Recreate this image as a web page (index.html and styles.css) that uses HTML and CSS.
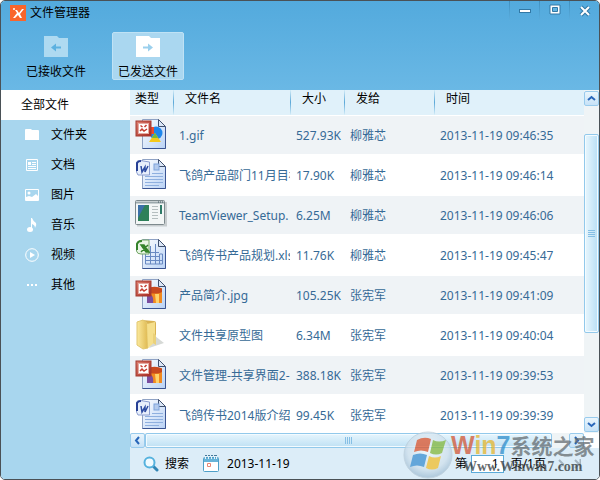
FILE: index.html
```html
<!DOCTYPE html>
<html lang="zh-CN">
<head>
  <meta charset="UTF-8" />
  <meta name="viewport" content="width=device-width, initial-scale=1.0" />
  <title>文件管理器</title>
  <link rel="stylesheet" href="styles.css">
</head>
<body>
  <svg width="0" height="0" class="defs" aria-hidden="true">
    <defs>
      <linearGradient id="pageFill" x1="0" y1="0" x2="1" y2="1">
        <stop offset="0" stop-color="#fdfeff" />
        <stop offset="1" stop-color="#b9d2f5" />
      </linearGradient>
      <linearGradient id="redFill" x1="0" y1="0" x2="1" y2="1">
        <stop offset="0" stop-color="#dd8070" />
        <stop offset="1" stop-color="#a82820" />
      </linearGradient>
      <linearGradient id="gold" x1="0" y1="0" x2="1" y2="0">
        <stop offset="0" stop-color="#fbe99d" />
        <stop offset="1" stop-color="#dfb950" />
      </linearGradient>
      <radialGradient id="orb" cx="0.5" cy="0.4" r="0.6">
        <stop offset="0" stop-color="#f4f9fc" />
        <stop offset="0.7" stop-color="#cfe0ec" />
        <stop offset="1" stop-color="#9dbbd2" />
      </radialGradient>
      <symbol id="page" viewBox="0 0 32 32">
        <path d="M7.500 1.500h16l7 7v22h-23z" fill="url(#pageFill)" stroke="#8fa2c4" />
        <path d="M30.500 9v21.500h-23" fill="none" stroke="#3a5492" />
        <path d="M23.500 1.500v7h7z" fill="#dce7f7" stroke="#40506f" />
      </symbol>
      <symbol id="badge" viewBox="0 0 32 32">
        <rect x="1" y="3" width="15" height="15" fill="url(#redFill)" stroke="#a33a31" />
        <rect x="3.500" y="5.500" width="10" height="10" fill="#fff" stroke="#e4aaa2" />
        <path d="M5.500 7.500l2 1.500M11.500 7l-2 2M5 13l2-2 2 2 3-2" fill="none" stroke="#c43d30" stroke-width="1.500" />
      </symbol>
      <symbol id="i-gif" viewBox="0 0 32 32">
        <use href="#page" />
        <circle cx="21" cy="15" r="6.500" fill="#1d86ed" />
        <rect x="14" y="9" width="5" height="7" fill="#ef4a2d" />
        <path d="M20 15l6 9H14z" fill="#f5c819" />
        <path d="M20 15l3 5-6 0z" fill="#76b83a" />
        <use href="#badge" />
      </symbol>
      <symbol id="i-jpg" viewBox="0 0 32 32">
        <use href="#page" />
        <rect x="12" y="10" width="15" height="15" fill="#f28a20" />
        <path d="M12 11c3-3 12-3 15 0v3c-4 2-10 2-15 0z" fill="#c8491f" />
        <path d="M12 18c4-4 7 1 6 7h-6z" fill="#7b4d9f" />
        <path d="M20 16h4v9h-3z" fill="#ffd26a" />
        <use href="#badge" />
      </symbol>
      <symbol id="i-doc" viewBox="0 0 32 32">
        <use href="#page" />
        <rect x="19" y="6" width="5" height="6" fill="#b4cbed" stroke="#7fa4dc" />
        <path d="M17 15.500h11M10 18.500h18M10 21.500h18M10 24.500h18M10 27.500h14" stroke="#8fb0df" />
        <path d="M1.500 5q0-3 4-2.500l9 1.500v13H3l-1.500-3z" fill="#e8effb" stroke="#8b9dce" />
        <path d="M2 13V5q1-2 4-2" fill="none" stroke="#274095" stroke-width="2" />
        <path d="M6 8l1 6 3-5v5l3-6" fill="none" stroke="#2e4ca2" stroke-width="1.500" />
      </symbol>
      <symbol id="i-xls" viewBox="0 0 32 32">
        <use href="#page" />
        <path d="M10 14.500h14M10 18.500h14M10 22.500h18M10.500 14v12h17V16h-3v10M15.500 8v18M20.500 6v20" fill="none" stroke="#6889c2" />
        <path d="M1.500 6q1-4 6-4h6.500v14H6q-4 0-4.500-3z" fill="#e9f5e5" stroke="#72a565" />
        <path d="M2 12V6q1-3 5-3" fill="none" stroke="#35832b" stroke-width="2" />
        <path d="M6 7h3l5 7h-3zM13 7L6 14" fill="#35832b" stroke="#35832b" stroke-width="1.500" />
      </symbol>
      <symbol id="i-exe" viewBox="0 0 32 32">
        <path d="M2 27.500h29V4" fill="none" stroke="#c8cdcf" stroke-width="2" />
        <rect x="0.500" y="2.500" width="29" height="24" rx="1" fill="#f3f6f6" stroke="#7e8a8e" />
        <path d="M1 4.500h28" stroke="#9ba8ac" stroke-width="2" />
        <path d="M23 4h1M25 4h1M27 4h1" stroke="#43565f" />
        <rect x="3" y="7" width="11" height="16" fill="#2e8059" />
        <path d="M3 7h7L3 20z" fill="#3b70a8" />
        <path d="M17 8.500h6M17 11.500h6M17 14.500h6M17 17.500h6M17 20.500h6" stroke="#b5bebf" />
        <path d="M26 7v9" stroke="#2f7b68" stroke-width="2" />
      </symbol>
      <symbol id="i-dir" viewBox="0 0 32 32">
        <path d="M20 18l9 7-15 5z" fill="#d6d9d6" />
        <path d="M7 2l12 1q2 0 2 2v19L8 29z" fill="#d8b354" />
        <path d="M2 4l6-2 4 3 1 25-5 1-6-4z" fill="url(#gold)" stroke="#e2c76f" />
        <path d="M12 6l8-2v20l-7 6z" fill="#f5df8c" />
        <path d="M18 15l3 2v10l-3-2z" fill="#ead17a" />
      </symbol>
    </defs>
  </svg>

  <div class="window">
    <header class="top">
      <div class="titlebar">
        <svg class="logo" width="16" height="16" viewBox="0 0 16 16" aria-hidden="true">
          <rect width="16" height="16" fill="#f9652c" />
          <path d="M5 5l2 0 2 3 3-4h2l-4 5 2 4h-2l-2-3-3 3H3l4-5z" fill="#fff" />
          <circle cx="4" cy="4" r="1" fill="#fff" />
        </svg>
        <h1>文件管理器</h1>
        <div class="controls">
          <button type="button" aria-label="最小化">
            <svg width="14" height="14" viewBox="0 0 14 14"><rect x="1.500" y="5.500" width="11" height="3" fill="#fff" stroke="#3278a5" /></svg>
          </button>
          <button type="button" aria-label="最大化">
            <svg width="14" height="14" viewBox="0 0 14 14"><path d="M2 1h10v9H2z" fill="#fff" stroke="#3278a5" /><path d="M4.500 3.500h5v4h-5z" fill="#62b4e1" stroke="#3278a5" /></svg>
          </button>
          <button type="button" aria-label="关闭">
            <svg width="14" height="14" viewBox="0 0 14 14"><path d="M3 3l8 8M11 3l-8 8" stroke="#3278a5" stroke-width="4" /><path d="M3 3l8 8M11 3l-8 8" stroke="#fff" stroke-width="2" /></svg>
          </button>
        </div>
      </div>
      <nav class="tabs">
        <button type="button" class="tab">
          <svg width="24" height="21" viewBox="0 0 24 21"><path d="M0 0h13l2 2h9v19H0z" fill="#aedaf1" /><path d="M7 11.500l5-4v3h5v2h-5v3z" fill="#5cb1e0" /></svg>
          已接收文件
        </button>
        <button type="button" class="tab active">
          <svg width="24" height="21" viewBox="0 0 24 21"><path d="M0 0h13l2 2h9v19H0z" fill="#fff" /><path d="M17 11.500l-5-4v3H7v2h5v3z" fill="#9bd0ed" /></svg>
          已发送文件
        </button>
      </nav>
    </header>

    <div class="content">
      <nav class="sidebar">
        <a href="#" class="all">全部文件</a>
        <a href="#">
          <svg width="14" height="14" viewBox="0 0 14 14"><path d="M0 2q0-1 1-1h5l1 1h6q1 0 1 1v9H0z" fill="#fff" /></svg>
          文件夹
        </a>
        <a href="#">
          <svg width="14" height="14" viewBox="0 0 14 14"><path d="M1.500 1.500h11v11h-11zM7 4.500h4M7 6.500h4M3 8.500h8M3 10.500h8" fill="none" stroke="#fff" /><path d="M3 4h3v3H3z" fill="#fff" /></svg>
          文档
        </a>
        <a href="#">
          <svg width="14" height="14" viewBox="0 0 14 14"><path d="M0.500 1.500h13v11H0.500z" fill="none" stroke="#fff" /><circle cx="4" cy="5" r="1.500" fill="#fff" /><path d="M1 9l3-1 3 1 4-3 2 2v5H1z" fill="#fff" /></svg>
          图片
        </a>
        <a href="#">
          <svg width="14" height="14" viewBox="0 0 14 14"><ellipse cx="5" cy="11.500" rx="3" ry="2.500" fill="#fff" /><path d="M6 0h1q1 3 4 5 1 2-1 5 0-3-3-4v6H6z" fill="#fff" /></svg>
          音乐
        </a>
        <a href="#">
          <svg width="14" height="14" viewBox="0 0 14 14"><circle cx="7" cy="7" r="6.300" fill="none" stroke="#fff" /><path d="M5 4l5 3-5 3z" fill="#fff" /></svg>
          视频
        </a>
        <a href="#">
          <svg width="14" height="14" viewBox="0 0 14 14"><path d="M2 6h2v2H2zM6 6h2v2H6zM10 6h2v2h-2z" fill="#fff" /></svg>
          其他
        </a>
      </nav>

      <main class="main">
        <div class="list">
          <table>
            <colgroup>
              <col class="c-type"><col class="c-name"><col class="c-size"><col class="c-to"><col>
            </colgroup>
            <thead>
              <tr><th>类型</th><th>文件名</th><th>大小</th><th>发给</th><th>时间</th></tr>
            </thead>
            <tbody>
              <tr><td><svg width="32" height="32"><use href="#i-gif" /></svg></td><td>1.gif</td><td>527.93K</td><td>柳雅芯</td><td>2013-11-19 09:46:35</td></tr>
              <tr><td><svg width="32" height="32"><use href="#i-doc" /></svg></td><td>飞鸽产品部门11月目标</td><td>17.90K</td><td>柳雅芯</td><td>2013-11-19 09:46:14</td></tr>
              <tr><td><svg width="32" height="32"><use href="#i-exe" /></svg></td><td>TeamViewer_Setup.</td><td>6.25M</td><td>柳雅芯</td><td>2013-11-19 09:46:06</td></tr>
              <tr><td><svg width="32" height="32"><use href="#i-xls" /></svg></td><td>飞鸽传书产品规划.xls</td><td>11.76K</td><td>柳雅芯</td><td>2013-11-19 09:45:47</td></tr>
              <tr><td><svg width="32" height="32"><use href="#i-jpg" /></svg></td><td>产品简介.jpg</td><td>105.25K</td><td>张宪军</td><td>2013-11-19 09:41:09</td></tr>
              <tr><td><svg width="32" height="32"><use href="#i-dir" /></svg></td><td>文件共享原型图</td><td>6.34M</td><td>张宪军</td><td>2013-11-19 09:40:04</td></tr>
              <tr><td><svg width="32" height="32"><use href="#i-jpg" /></svg></td><td>文件管理-共享界面2-</td><td>388.18K</td><td>张宪军</td><td>2013-11-19 09:39:53</td></tr>
              <tr><td><svg width="32" height="32"><use href="#i-doc" /></svg></td><td>飞鸽传书2014版介绍</td><td>99.45K</td><td>张宪军</td><td>2013-11-19 09:39:39</td></tr>
            </tbody>
          </table>
        </div>

        <div class="vbar">
          <button type="button" class="arrow" aria-label="向上"><svg width="9" height="9" viewBox="0 0 9 9"><path d="M1 6l3.500-3L8 6" /></svg></button>
          <div class="track"><div class="thumb"><svg width="7" height="9" viewBox="0 0 7 9"><path d="M0 1.500h7M0 3.500h7M0 5.500h7M0 7.500h7" /></svg></div></div>
          <button type="button" class="arrow" aria-label="向下"><svg width="9" height="9" viewBox="0 0 9 9"><path d="M1 3l3.500 3L8 3" /></svg></button>
        </div>

        <div class="hbar">
          <button type="button" class="arrow" aria-label="向左"><svg width="9" height="9" viewBox="0 0 9 9"><path d="M6 1L3 4.500 6 8" /></svg></button>
          <div class="track"><div class="thumb"><svg width="9" height="7" viewBox="0 0 9 7"><path d="M1.500 0v7M3.500 0v7M5.500 0v7M7.500 0v7" /></svg></div></div>
          <button type="button" class="arrow" aria-label="向右"><svg width="9" height="9" viewBox="0 0 9 9"><path d="M3 1l3 3.500L3 8" /></svg></button>
        </div>

        <footer class="footer">
          <button type="button" class="tool">
            <svg width="16" height="16" viewBox="0 0 16 16"><path d="M10 10l4 4" stroke="#3186b5" stroke-width="3" stroke-linecap="round" /><circle cx="6.500" cy="6.500" r="5" fill="#effaff" stroke="#55b2de" stroke-width="2" /></svg>
            搜索
          </button>
          <button type="button" class="tool date">
            <svg width="16" height="17" viewBox="0 0 16 17"><rect x="0.500" y="2.500" width="15" height="14" rx="1" fill="#fff" stroke="#4d9fc8" /><path d="M1 3h14v4H1z" fill="#67b3d8" /><path d="M2.500 1v3M5.500 1v3M8.500 1v3M11.500 1v3M13.500 1v3" stroke="#e6f3fa" /><path d="M2 .5h2M5 .5h2M8 .5h2M11 .5h3" stroke="#45799a" /><path d="M4.500 8.500h3v3h-3z" fill="#fff" stroke="#e98675" /></svg>
            2013-11-19
          </button>
          <div class="pager">
            <label for="page-no">第</label>
            <input type="text" id="page-no" value="1">
            <span>页/1页</span>
            <button type="button" aria-label="下一页"><svg width="7" height="10" viewBox="0 0 7 10"><path d="M1 1l4 4-4 4" /></svg></button>
            <button type="button" aria-label="末页"><svg width="7" height="10" viewBox="0 0 7 10"><path d="M1 1l4 4-4 4M6.500 0v10" /></svg></button>
          </div>
        </footer>
      </main>
    </div>

    <div class="watermark">
      <svg width="50" height="48" viewBox="0 0 50 48" aria-hidden="true">
        <ellipse cx="25" cy="24" rx="24" ry="23" fill="url(#orb)" stroke="#b9cbd8" />
        <path d="M14 9q7-4 14-1l-3 13q-7-3-14 0z" fill="#dd542c" />
        <path d="M30 9q6 3 13 0l-4 13q-6 3-12 0z" fill="#84b83b" />
        <path d="M10 24q7-3 14 0l-3 12q-7-3-14 0z" fill="#3b8fd0" />
        <path d="M26 25q6 3 12 0l-3 12q-6 3-12 0z" fill="#f2bd2c" />
      </svg>
      <div class="mark-text">
        <div class="mark-name"><span class="red">W</span><span class="yellow">in</span><span class="blue">7</span>系统之家</div>
        <div class="mark-url">Www.Winwin7.com</div>
      </div>
    </div>
  </div>
</body>
</html>
```
FILE: styles.css
```css
* {
  box-sizing: border-box;
}
body {
  margin: 0;
  background-color: #fff;
  color: #000;
  font-family: "Noto Sans", "Noto Sans CJK SC", sans-serif;
  font-size: 12px;
  line-height: 16px;
}
button, input {
  font: inherit;
  color: inherit;
}
button {
  margin: 0;
  padding: 0;
  border: none;
  background: none;
  cursor: pointer;
}
a {
  color: inherit;
  text-decoration: none;
}
svg {
  display: block;
  flex: none;
}
.defs {
  position: absolute;
}
.window {
  position: relative;
  display: flex;
  flex-direction: column;
  height: 100vh;
  border: 1px solid #4a5156;
  border-radius: 5px;
  overflow: hidden;
}

/* title bar and tabs */
.top {
  height: 89px;
  flex: none;
  background: linear-gradient(#53aadd, #6ab8e5);
}
.titlebar {
  display: flex;
  height: 24px;
  padding-left: 9px;
}
.logo {
  margin-top: 4px;
}
h1 {
  flex: 1;
  margin: 4px 0 0 4px;
  font-size: 12px;
  font-weight: normal;
}
.controls {
  display: flex;
  height: 20px;
}
.controls button {
  width: 30px;
  padding: 3px 8px;
  border-left: 1px solid #7fc3e9;
  border-image: linear-gradient(#3f8fbf, #5db0e0) 1;
  border-width: 0 0 0 1px;
}
.tabs {
  display: flex;
  gap: 20px;
  padding: 7px 19px;
}
.tab {
  display: flex;
  flex-direction: column;
  align-items: center;
  gap: 7px;
  width: 72px;
  height: 48px;
  padding-top: 4px;
  border-radius: 2px;
  white-space: nowrap;
}
.tab.active {
  background-color: #aad7f0;
  border: 1px solid #bfe2f5;
  padding-top: 3px;
}

/* left categories */
.content {
  display: flex;
  flex: 1;
  min-height: 0;
}
.sidebar {
  width: 129px;
  flex: none;
  background-color: #a8d6ee;
}
.sidebar a {
  display: flex;
  align-items: center;
  gap: 12px;
  height: 30px;
  padding-left: 24px;
}
.sidebar .all {
  padding-left: 20px;
  background-color: #fff;
}
.main {
  flex: 1;
  min-width: 0;
  display: grid;
  grid-template-columns: 1fr 15px;
  grid-template-rows: 1fr 15px 31px;
}

/* file table */
.list {
  min-height: 0;
  overflow: hidden;
}
table {
  width: 100%;
  table-layout: fixed;
  border-collapse: collapse;
}
.c-type {
  width: 43px;
}
.c-name {
  width: 117px;
}
.c-size {
  width: 54px;
}
.c-to {
  width: 90px;
}
th {
  height: 25px;
  padding: 0 0 6px 12px;
  background: linear-gradient(#d5edf8, #5ba8d8, #d5edf8) no-repeat left / 1px 100% #e0f1fa;
  border-bottom: 1px solid #fff;
  font-weight: normal;
  text-align: left;
}
th:first-child {
  padding-left: 5px;
  background: #e0f1fa;
}
td {
  height: 40px;
  padding: 2px 0 0 6px;
  border-bottom: 2px solid #fff;
  color: #366a96;
  white-space: nowrap;
  overflow: hidden;
}
td:first-child {
  padding: 0 0 2px 5px;
}
tbody tr:nth-child(odd) td {
  background-color: #eff3f6;
}

/* scroll bars */
.vbar, .hbar {
  display: flex;
  background-color: #eff4f6;
}
.vbar {
  flex-direction: column;
  padding: 1px 0;
}
.hbar {
  grid-column: 1;
}
.arrow {
  display: flex;
  align-items: center;
  justify-content: center;
  width: 15px;
  height: 15px;
  flex: none;
  border: 1px solid #98cbed;
  border-radius: 2px;
  background: linear-gradient(#eaf5fc, #c6e2f7);
}
.arrow path {
  fill: none;
  stroke: #2967ba;
  stroke-width: 2;
}
.track {
  flex: 1;
}
.thumb {
  display: flex;
  align-items: center;
  justify-content: center;
  border: 1px solid #92c9eb;
  border-radius: 2px;
  box-shadow: inset 0 0 0 1px #f3fbff;
}
.thumb path {
  stroke: #86bfe5;
}
.vbar .thumb {
  height: 64%;
  margin-top: 28px;
  background: linear-gradient(to right, #e8f6fd, #b9dff5);
}
.hbar .thumb {
  width: 96%;
  height: 15px;
  background: linear-gradient(#e6f5fd, #bfe1f4);
}

/* bottom bar */
.footer {
  grid-column: 1 / 3;
  display: flex;
  align-items: center;
  padding: 0 13px;
  background-color: #dcedf8;
}
.tool {
  display: flex;
  align-items: center;
  gap: 6px;
}
.date {
  margin-left: 14px;
  gap: 8px;
}
.pager {
  display: flex;
  align-items: center;
  gap: 4px;
  margin-left: auto;
}
.pager input {
  width: 33px;
  height: 18px;
  padding: 0 4px;
  border: 1px solid #5baad8;
  background-color: #fff;
  text-align: right;
}
.pager span {
  margin: 0 8px 0 3px;
}
.pager button {
  width: 12px;
}
.pager path {
  fill: none;
  stroke: #a4b5c0;
  stroke-width: 2;
}

/* site mark over the bottom right corner */
.watermark {
  position: absolute;
  right: 6px;
  bottom: 0;
  display: flex;
  opacity: 0.75;
  pointer-events: none;
}
.mark-text {
  width: 142px;
  margin-left: -2px;
  white-space: nowrap;
}
.mark-name {
  height: 28px;
  color: #666c70;
  font-family: "Liberation Sans", "Noto Sans CJK SC", sans-serif;
  font-size: 21px;
  font-weight: bold;
  line-height: 28px;
}
.mark-name span {
  font-size: 25px;
}
.mark-name .red {
  color: #d35634;
}
.mark-name .yellow {
  color: #e6b62f;
}
.mark-name .blue {
  color: #2f8dcb;
}
.mark-url {
  padding-left: 12px;
  color: #33383b;
  font-family: "Liberation Serif", serif;
  font-size: 14px;
  font-weight: bold;
}
```
